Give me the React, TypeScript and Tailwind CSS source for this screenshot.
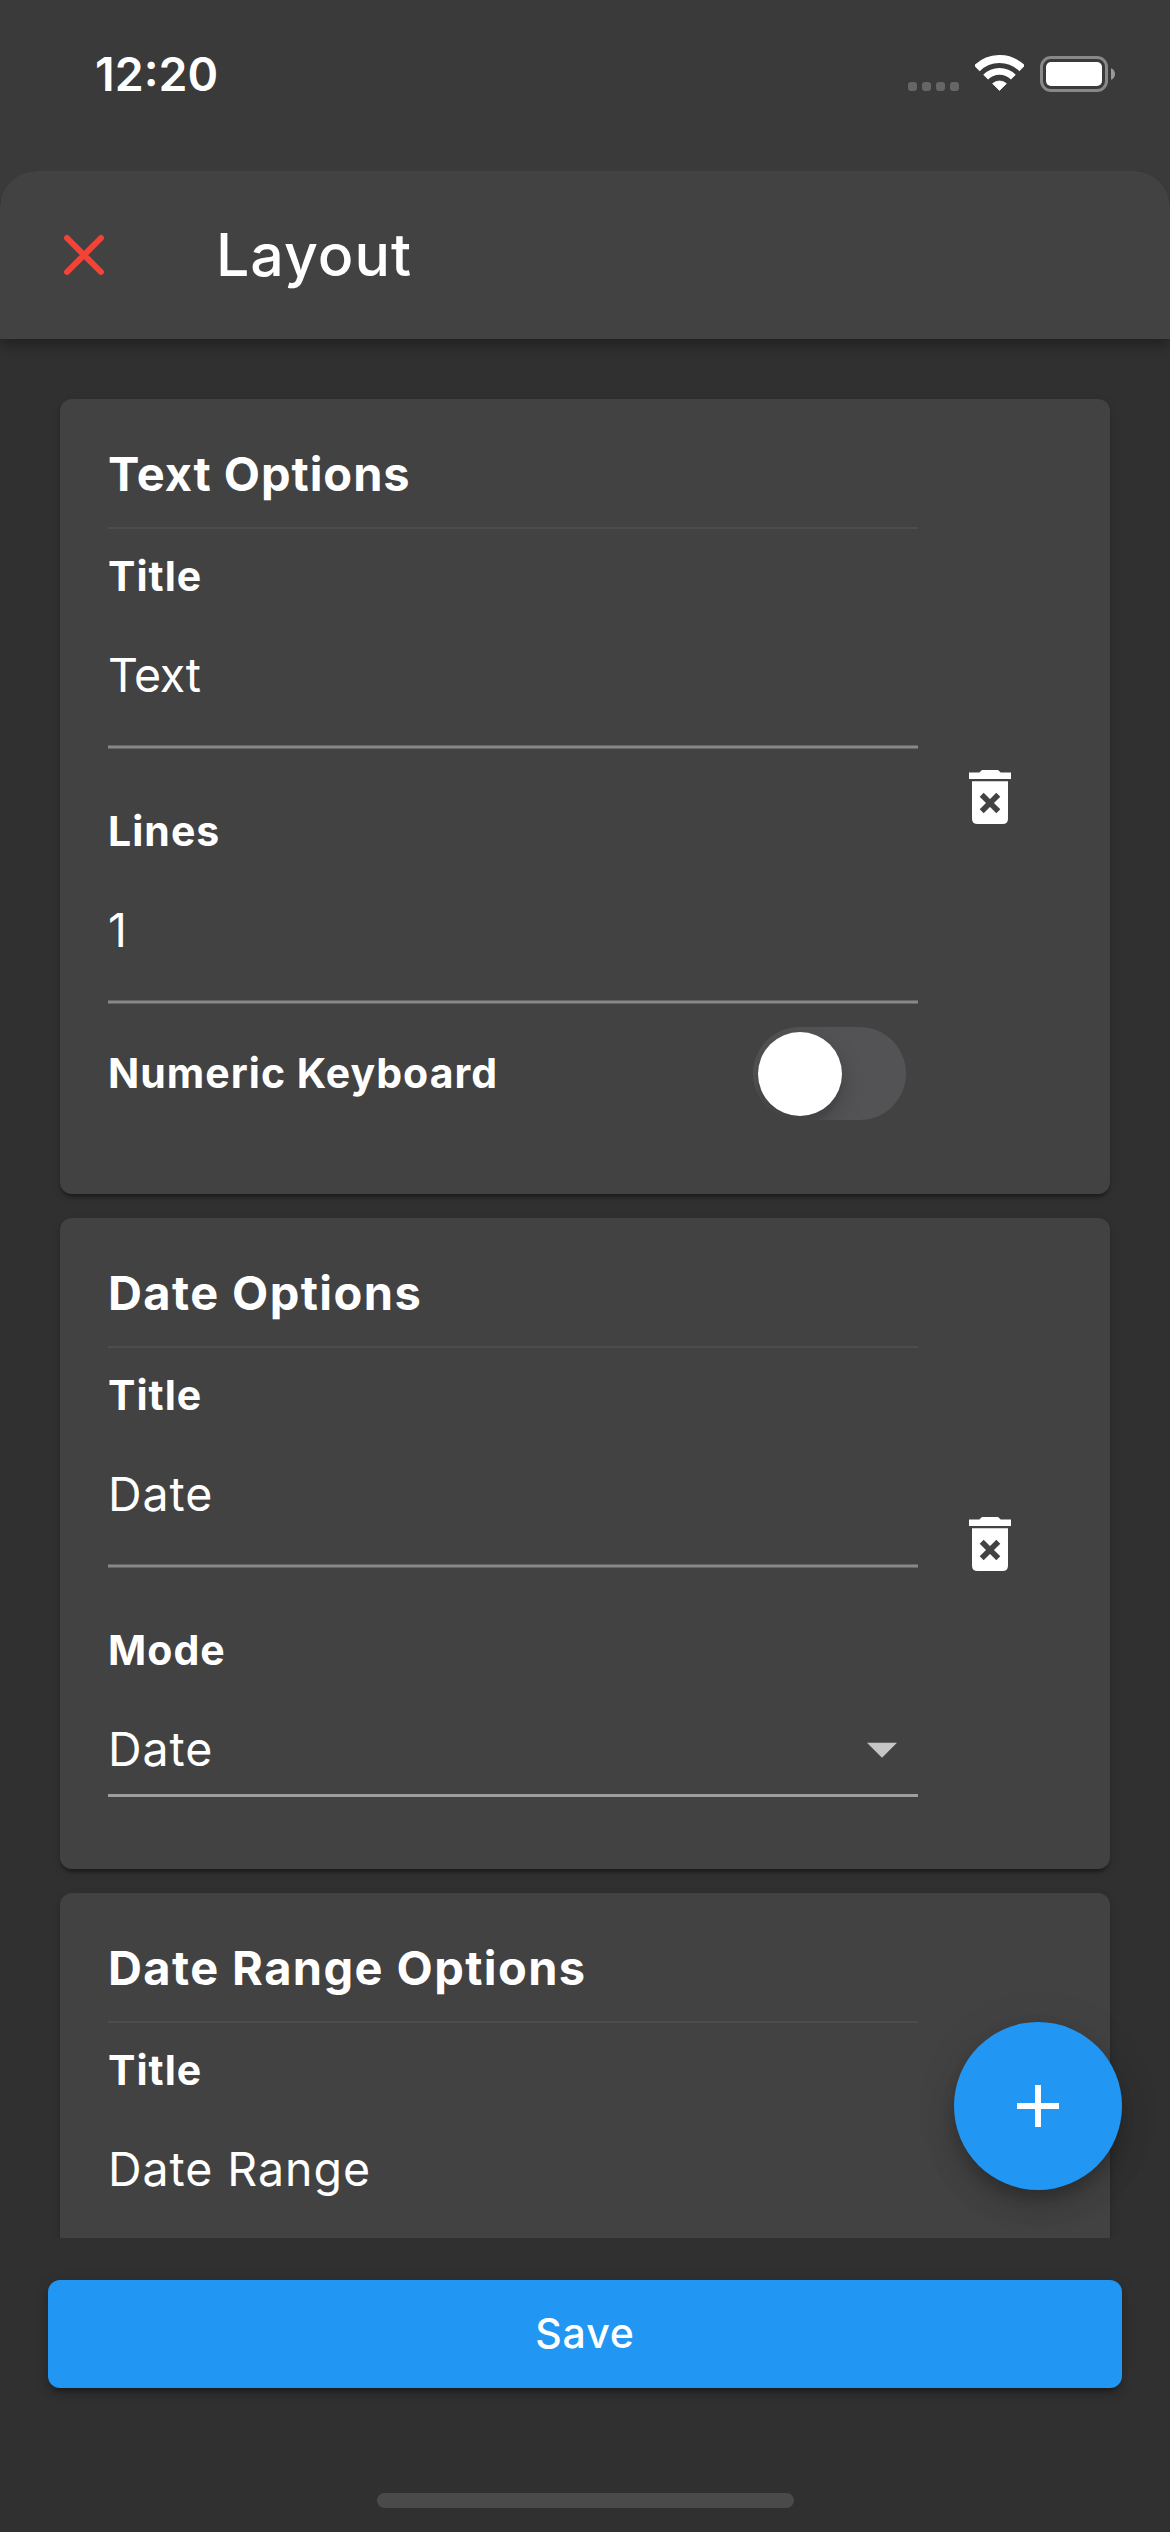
import type { ReactNode } from "react";

function WifiIcon() {
  return (
    <svg className="h-[36px] w-[49px]" viewBox="0 0 49 36" fill="none" stroke="#fff">
      <path d="M1.87 13.37A32 32 0 0 1 47.13 13.37" strokeWidth="8" />
      <path d="M10.64 22.14A19.6 19.6 0 0 1 38.36 22.14" strokeWidth="6.8" />
      <path
        d="M17.6 28.6A10.4 10.4 0 0 1 31.4 28.6L24.5 35.4Z"
        fill="#fff"
        strokeWidth="0.8"
        strokeLinejoin="round"
      />
    </svg>
  );
}

function BatteryIcon() {
  return (
    <svg className="h-[36px] w-[76px]" viewBox="0 0 76 36" fill="none">
      <rect x="1.5" y="1.5" width="65" height="33" rx="9.5" stroke="#888" strokeWidth="3" />
      <rect x="6" y="6" width="56" height="24" rx="5" fill="#fff" />
      <path d="M71 12.2C73.6 13 75 15.4 75 18S73.6 23 71 23.8Z" fill="#999" />
    </svg>
  );
}

function StatusBar() {
  return (
    <div className="flex h-[148px] items-center justify-between pr-[54px] pl-[95px]">
      <span className="text-[46.5px] leading-[56px] font-semibold">12:20</span>
      <div className="flex items-center">
        <div className="mt-[25px] flex gap-[5px]">
          {[0, 1, 2, 3].map((i) => (
            <span key={i} className="size-[9px] rounded-[3px] bg-[#666]" />
          ))}
        </div>
        <span className="mr-[16px] -mt-[2px] ml-[16.5px]">
          <WifiIcon />
        </span>
        <BatteryIcon />
      </div>
    </div>
  );
}

function CloseIcon() {
  return (
    <svg
      className="size-12"
      viewBox="0 0 48 48"
      stroke="#f44336"
      strokeWidth="6"
      strokeLinecap="round"
    >
      <path d="M7 7L41 41M41 7L7 41" />
    </svg>
  );
}

function TrashIcon() {
  return (
    <svg className="h-[53px] w-[42px] overflow-visible" viewBox="0 0 42 53" fill="#fff">
      <path d="M0 2.6H10.3L13 0H29L31.7 2.6H42V9H0Z" />
      <path d="M3 11.3H39V48.5Q39 54 33.5 54H8.5Q3 54 3 48.5Z" />
      <path d="M12.7 24.7L29.3 41.3M29.3 24.7L12.7 41.3" stroke="#424242" strokeWidth="5.6" />
    </svg>
  );
}

function Label({ children }: { children: ReactNode }) {
  return (
    <div className="text-[41px] leading-[50px] font-bold tracking-[1.03px]">{children}</div>
  );
}

function Value({ children }: { children: ReactNode }) {
  return (
    <div className="mt-[46px] text-[46.5px] leading-[56px] tracking-[0.95px]">{children}</div>
  );
}

function TextField({ label, children }: { label: string; children: ReactNode }) {
  return (
    <div>
      <Label>{label}</Label>
      <Value>{children}</Value>
      <div className="mt-[42px] h-[4px] border-y border-[#666] bg-[#888]" />
    </div>
  );
}

function SelectField({ label, value }: { label: string; value: string }) {
  return (
    <div>
      <Label>{label}</Label>
      <div className="flex items-end justify-between pr-[21px]">
        <Value>{value}</Value>
        <svg className="mb-[19px] h-[16px] w-[30px]" viewBox="0 0 30 16" fill="#c6c6c6">
          <path d="M0 0.7H30L15 15.7Z" />
        </svg>
      </div>
      <div className="mt-[17px] h-[3px] bg-[#9e9e9e]" />
    </div>
  );
}

function Card({
  title,
  className,
  children,
}: {
  title: ReactNode;
  className: string;
  children: ReactNode;
}) {
  return (
    <section
      className={`flex shrink-0 rounded-[12px] bg-[#424242] pr-[99px] pl-[48px] shadow-[0_6px_3px_-3px_rgba(0,0,0,0.2),0_3px_3px_rgba(0,0,0,0.14),0_3px_9px_rgba(0,0,0,0.12)] ${className}`}
    >
      <div className="w-[810px] pt-[47px]">
        <h2 className="text-[47px] leading-[56px] font-bold tracking-[1.4px]">{title}</h2>
        <div className="mt-[25px] mb-[22px] h-[2px] bg-[#4d4d4d]" />
        <div className="flex flex-col gap-[57px]">{children}</div>
      </div>
      <button className="ml-auto self-center" aria-label="Delete">
        <TrashIcon />
      </button>
    </section>
  );
}

function Switch() {
  return (
    <div className="mr-[12px] flex h-[93px] w-[153px] items-center overflow-hidden rounded-full bg-[#535355] pl-[4.5px]">
      <div className="size-[84px] rounded-full bg-white shadow-[0_9px_24px_rgba(0,0,0,0.2),0_9px_3px_rgba(0,0,0,0.06)]" />
    </div>
  );
}

export default function App() {
  return (
    <div className="flex h-[2532px] w-[1170px] flex-col overflow-hidden bg-[#3a3a3a] font-['Inter',sans-serif] text-white">
      <StatusBar />
      <div className="mt-[23px] flex flex-1 flex-col overflow-hidden rounded-t-[36px] bg-[#303030]">
        <header className="relative z-10 flex h-[168px] shrink-0 items-center bg-[#424242] pl-[60px] shadow-[0_6px_12px_rgba(0,0,0,0.32)]">
          <CloseIcon />
          <h1 className="ml-[108px] text-[59px] leading-[70px] font-medium tracking-[1px]">
            Layout
          </h1>
        </header>

        <main className="relative h-[1899px] shrink-0">
          <div className="flex h-full flex-col gap-[24px] overflow-hidden px-[60px] pt-[60px]">
            <Card
              title={<span className="tracking-[0.95px]">Text Options</span>}
              className="h-[795px]"
            >
              <TextField label="Title">
                <span className="tracking-[-0.3px]">Text</span>
              </TextField>
              <div>
                <TextField label="Lines">1</TextField>
                <div className="mt-[23px] flex items-center justify-between">
                  <div className="mb-[2px]">
                    <Label>Numeric Keyboard</Label>
                  </div>
                  <Switch />
                </div>
              </div>
            </Card>
            <Card title="Date Options" className="h-[651px]">
              <TextField label="Title">Date</TextField>
              <SelectField label="Mode" value="Date" />
            </Card>
            <Card title="Date Range Options" className="h-[795px]">
              <TextField label="Title">Date Range</TextField>
            </Card>
          </div>
          <button
            className="absolute right-[48px] bottom-[48px] flex size-[168px] items-center justify-center rounded-full bg-[#2196f3] shadow-[0_9px_15px_-3px_rgba(0,0,0,0.2),0_18px_30px_rgba(0,0,0,0.14),0_3px_54px_rgba(0,0,0,0.05)]"
            aria-label="Add"
          >
            <svg className="size-[42px]" viewBox="0 0 42 42" fill="#fff">
              <path d="M18 0H24V18H42V24H24V42H18V24H0V18H18Z" />
            </svg>
          </button>
        </main>

        <div className="mt-[42px] px-[48px]">
          <button className="block h-[108px] w-full rounded-[12px] bg-[#2196f3] pb-[2px] text-[41px] leading-[50px] font-medium tracking-[0.9px] shadow-[0_9px_3px_-6px_rgba(0,0,0,0.2),0_6px_6px_rgba(0,0,0,0.14),0_3px_15px_rgba(0,0,0,0.12)]">
            Save
          </button>
        </div>
        <div className="mx-auto mt-[105px] h-[15px] w-[417px] rounded-full bg-[#4a4a4a]" />
      </div>
    </div>
  );
}
